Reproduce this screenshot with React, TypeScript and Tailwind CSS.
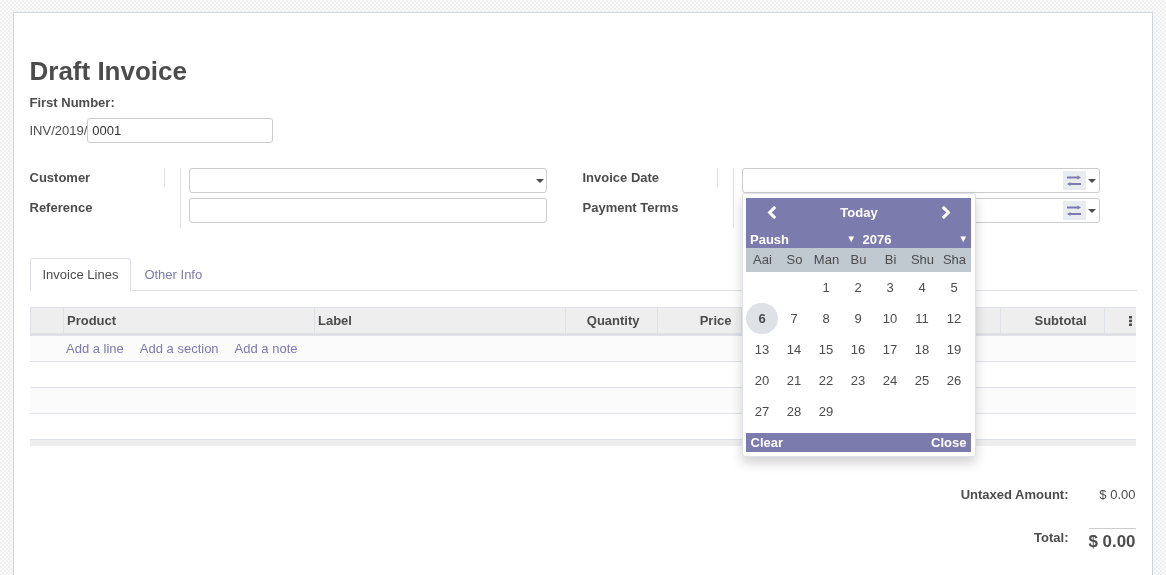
const days = [
  ['', '', '1', '2', '3', '4', '5'],
  ['6', '7', '8', '9', '10', '11', '12'],
  ['13', '14', '15', '16', '17', '18', '19'],
  ['20', '21', '22', '23', '24', '25', '26'],
  ['27', '28', '29', '', '', '', ''],
];
const weekdays = ['Aai', 'So', 'Man', 'Bu', 'Bi', 'Shu', 'Sha'];

function Caret() {
  return <span className="w-0 h-0 border-x-[4px] border-x-transparent border-t-[4px] border-t-[#4c4c4c]" />;
}

function SwapButton() {
  return (
    <span className="w-[23px] h-[19px] bg-[#e9ecef] flex items-center justify-center">
      <svg width="14" height="11" viewBox="0 0 14 11" fill="#7c7bad">
        <path d="M0 1.5h10.5V.5l3.5 2-3.5 2v-1H0z" />
        <path d="M14 8H3.5V7L0 9l3.5 2v-1H14z" />
      </svg>
    </span>
  );
}

function DateField() {
  return (
    <div className="w-[358px] h-[25px] border border-[#cccccc] rounded-[3px] flex items-center justify-end pr-[3px] gap-[2px]">
      <SwapButton />
      <Caret />
    </div>
  );
}

function Chevron({ flip }: { flip?: boolean }) {
  return (
    <svg width="10" height="13" viewBox="0 0 10 13" fill="none" stroke="white" strokeWidth="3" className={flip ? 'rotate-180' : ''}>
      <path d="M8.2.9 2.6 6.5l5.6 5.6" />
    </svg>
  );
}

function DatePicker() {
  return (
    <div className="absolute left-[742px] top-[193px] w-[234px] h-[264px] bg-white border border-[#dee2e6] rounded-[3px] shadow-[0_6px_12px_rgba(0,0,0,0.175)] pt-[4px] pl-[3px] pr-[4px] text-[13px] text-[#4c4c4c]">
      <div className="bg-[#7c7bad] text-white font-bold">
        <div className="h-[33px] flex items-center justify-between pl-[21px] pr-[20px] pb-[5px]">
          <Chevron />
          <span className="translate-y-[0.5px]">Today</span>
          <Chevron flip />
        </div>
        <div className="h-[17px] flex items-center relative pl-[4px]">
          <span>Paush</span>
          <span className="absolute left-[100.5px] top-[1px] text-[9.5px] font-normal">▼</span>
          <span className="absolute left-[116.5px]">2076</span>
          <span className="absolute right-[3px] top-[1px] text-[9.5px] font-normal">▼</span>
        </div>
      </div>
      <div className="grid grid-cols-[repeat(7,32px)] h-[24px] pl-[0.5px] bg-[#c0c8d0] items-center text-center">
        {weekdays.map((d) => (
          <span key={d}>{d}</span>
        ))}
      </div>
      <div className="grid grid-cols-[repeat(7,32px)] text-center">
        {days.flat().map((d, i) => (
          <span
            key={i}
            className={
              d === '6'
                ? 'h-[31px] flex items-center justify-center rounded-full bg-[#dee2e6] font-bold'
                : 'h-[31px] flex items-center justify-center'
            }
          >
            {d}
          </span>
        ))}
      </div>
      <div className="h-[19px] mt-[6px] bg-[#7c7bad] text-white font-bold flex items-center justify-between px-[4.5px]">
        <span>Clear</span>
        <span>Close</span>
      </div>
    </div>
  );
}

const columns = [
  { label: 'Product', w: 'w-[251px]', cls: 'text-left pl-[3.5px]' },
  { label: 'Label', w: 'w-[251px]', cls: 'text-left pl-[3.5px]' },
  { label: 'Quantity', w: 'w-[92px]', cls: 'text-right pr-[17px]' },
  { label: 'Price', w: 'w-[84px]', cls: 'text-right pr-[9px]' },
  { label: '', w: 'w-[259px]', cls: '' },
  { label: 'Subtotal', w: 'w-[104px]', cls: 'text-right pr-[17px]' },
];

export default function App() {
  return (
    <div className="h-[575px] overflow-hidden relative bg-[#f6f6f6] bg-[repeating-conic-gradient(#f0f0f0_0_25%,#fafafa_0_50%)] bg-[length:4px_4px] pt-[12px] px-[13px] font-['Liberation_Sans',Arial,sans-serif] text-[13px] text-[#4c4c4c] will-change-transform">
      <div className="w-[1140px] h-[600px] bg-white border border-[#ced4da] px-[15.5px] pt-[40px]">
        <h1 className="text-[26px] leading-[36px] font-bold">Draft Invoice</h1>
        <div className="mt-[4px] font-bold leading-[20px]">First Number:</div>
        <div className="mt-[5px] flex items-center h-[25px]">
          <span>INV/2019/</span>
          <div className="w-[186px] h-[25px] border border-[#cccccc] rounded-[3px] px-[4px] flex items-center text-[#333333]">0001</div>
        </div>

        <div className="mt-[25px] flex h-[60px]">
          <div className="w-[135px] font-bold border-r border-[#dee2e6] h-[19px] leading-[19px]">Customer</div>
          <div className="w-[16px] h-[60px] border-r border-[#dee2e6]" />
          <div className="pl-[8px] w-[402px] flex flex-col gap-[5px]">
            <div className="w-[358px] h-[25px] border border-[#cccccc] rounded-[3px] flex items-end justify-end pr-[2px] pb-[9px]">
              <Caret />
            </div>
            <div className="w-[358px] h-[25px] border border-[#cccccc] rounded-[3px]" />
          </div>
          <div className="w-[135px] font-bold border-r border-[#dee2e6] h-[19px] leading-[19px]">Invoice Date</div>
          <div className="w-[16px] h-[60px] border-r border-[#dee2e6]" />
          <div className="pl-[8px] flex flex-col gap-[5px]">
            <DateField />
            <DateField />
          </div>
        </div>
        <div className="-mt-[30px] flex font-bold leading-[19px] h-[30px]">
          <div className="w-[553px]">Reference</div>
          <div>Payment Terms</div>
        </div>

        <div className="mt-[30px] h-[33px] flex border-b border-[#dee2e6] relative">
          <div className="h-[33px] px-[12px] border border-[#dee2e6] border-b-white rounded-t-[3px] leading-[31px]">Invoice Lines</div>
          <div className="h-[32px] px-[13px] leading-[33px] text-[#7c7bad]">Other Info</div>
        </div>

        <div className="mt-[16px] w-[1106px]">
          <div className="flex h-[29px] bg-[#eeeeee] border-t border-[#dee2e6] border-b-[3px] border-b-[#dee2e6] font-bold items-stretch">
            <div className="w-[34px] border-x border-[#dee2e6]" />
            {columns.map((c) => (
              <div key={c.label || 'blank'} className={`${c.w} ${c.cls} border-r border-[#dee2e6] leading-[25px]`}>
                {c.label}
              </div>
            ))}
            <div className="flex-1 flex items-center justify-end pr-[4px]">
              <svg width="3" height="10" viewBox="0 0 3 10" fill="#4c4c4c">
                <rect width="3" height="2.5" />
                <rect y="3.7" width="3" height="2.5" />
                <rect y="7.5" width="3" height="2.5" />
              </svg>
            </div>
          </div>
          <div className="h-[26px] bg-[#fbfbfb] border-b border-[#dee2e6] flex items-center pl-[36.5px] gap-[16px] text-[#7c7bad]">
            <span>Add a line</span>
            <span>Add a section</span>
            <span>Add a note</span>
          </div>
          <div className="h-[26px] border-b border-[#dee2e6]" />
          <div className="h-[26px] bg-[#fbfbfb] border-b border-[#dee2e6]" />
          <div className="h-[26px] border-b border-[#dee2e6]" />
          <div className="h-[6px] bg-[#eeeeee]" />
        </div>

        <div className="mt-[39px] w-[1106px] flex justify-end">
          <div className="grid grid-cols-[auto_67px] text-right whitespace-nowrap">
            <span className="font-bold leading-[19px]">Untaxed Amount:</span>
            <span className="leading-[19px]">$ 0.00</span>
            <span className="font-bold leading-[19px] mt-[24px]">Total:</span>
            <span className="mt-[24px] ml-[20px] border-t border-[#cccccc] text-[16.9px] font-bold leading-[25px]">$ 0.00</span>
          </div>
        </div>
      </div>
      <DatePicker />
    </div>
  );
}
